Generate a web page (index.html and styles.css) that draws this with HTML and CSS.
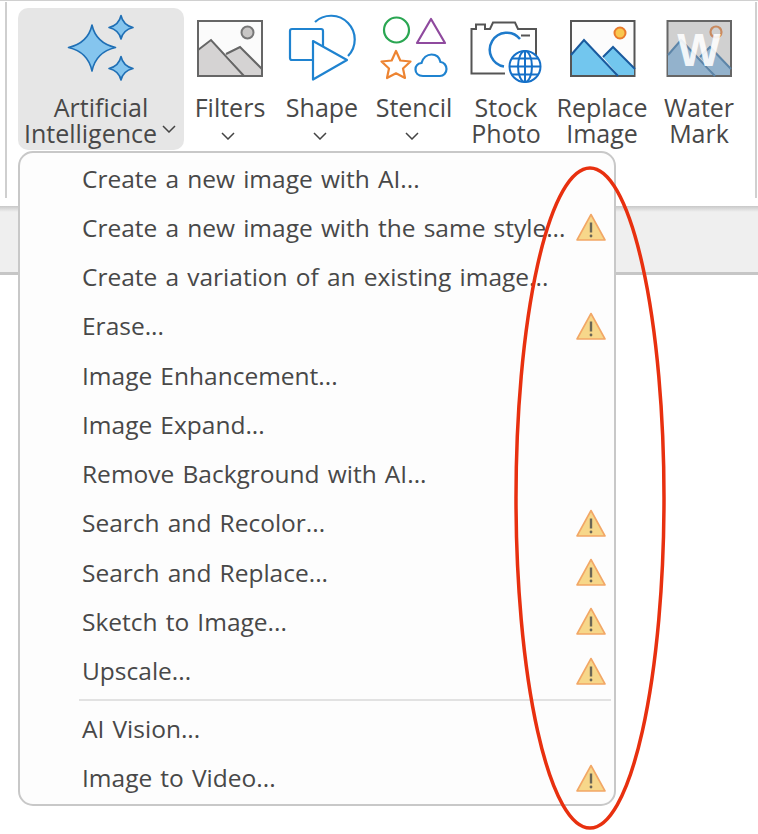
FILE: index.html
```html
<!DOCTYPE html>
<html lang="en">
<head>
<meta charset="utf-8">
<title>Artificial Intelligence menu</title>
<link rel="stylesheet" href="styles.css">
</head>
<body>
<div class="page">
  <header class="ribbon">
    <div class="tools">
      <div class="tool tool-ai">
        <svg class="icon" viewBox="61 12 80 70"><g fill="#85c5ee" stroke="#1f6fb5" stroke-width="1.6" stroke-linejoin="round"><path d="M92 25Q96 43 115.500 47.500Q96 52 92 71Q88 52 68.500 47.500Q88 43 92 25Z"/><path d="M121 15.500Q123 25 133 27.500Q123 30 121 39Q119 30 109 27.500Q119 25 121 15.500Z"/><path d="M121 56.500Q123 66 133 68.500Q123 71 121 80Q119 71 109 68.500Q119 66 121 56.500Z"/></g></svg>
        <div class="label">Artificial<br>Intelligence<svg class="chev-inline" viewBox="0 0 14 8"><path d="M1 1l6 6 6-6" fill="none" stroke="#444" stroke-width="1.500"/></svg></div>
      </div>
      <div class="tool">
        <svg class="icon" viewBox="190 12 80 70"><rect x="198" y="21" width="64" height="55" fill="#fbfbfb" stroke="#666" stroke-width="2"/><path d="M199 50L211 40L244 75H199Z" fill="#d5d3d3"/><path d="M226 54L240 47L261 68V75H244Z" fill="#d5d3d3"/><path d="M198 50L211 40L244 76M226 54L240 47L262 69" fill="none" stroke="#666" stroke-width="2"/><circle cx="247.500" cy="32.500" r="6" fill="#c8c6c5" stroke="#777" stroke-width="2"/></svg>
        <div class="label">Filters</div>
        <svg class="chev" viewBox="0 0 14 8"><path d="M1 1l6 6 6-6" fill="none" stroke="#444" stroke-width="1.500"/></svg>
      </div>
      <div class="tool">
        <svg class="icon" viewBox="282 12 80 70"><g fill="#fff" stroke="#1f83d0" stroke-width="2.200" stroke-linejoin="round"><path d="M315 22A23.700 23.700 0 0 1 348 56" fill="none"/><rect x="290" y="29" width="33" height="31" rx="2"/><path d="M313 41L347 60L313 79.500Z"/></g></svg>
        <div class="label">Shape</div>
        <svg class="chev" viewBox="0 0 14 8"><path d="M1 1l6 6 6-6" fill="none" stroke="#444" stroke-width="1.500"/></svg>
      </div>
      <div class="tool">
        <svg class="icon" viewBox="374 12 80 70"><circle cx="396.500" cy="30" r="12.500" fill="none" stroke="#2aa652" stroke-width="2.200"/><path d="M431 19L445 43H417Z" fill="none" stroke="#8f4a9e" stroke-width="2.200" stroke-linejoin="round"/><path d="M396 51L400.300 60.500L410.500 61.500L403 68.500L405 78L396 73.300L387 78L389 68.500L381.500 61.500L391.700 60.500Z" fill="none" stroke="#ed8432" stroke-width="2.200" stroke-linejoin="round"/><path d="M423 76C418 76 415.500 73 415.500 69.500C415.500 66 418 63.500 421.500 63C423 58 427 54.500 431.500 54.500C436 54.500 439.500 57.500 440.500 62C444 62 446.500 65.500 446.500 69C446.500 73 443.500 76 440 76Z" fill="none" stroke="#1f83d0" stroke-width="2.200"/></svg>
        <div class="label">Stencil</div>
        <svg class="chev" viewBox="0 0 14 8"><path d="M1 1l6 6 6-6" fill="none" stroke="#444" stroke-width="1.500"/></svg>
      </div>
      <div class="tool">
        <svg class="icon" viewBox="466 12 80 70"><path d="M505 73.500H471.500V29H476V24.500H485V29H490L493 22.500H515L518 29H536V55" fill="none" stroke="#555" stroke-width="2"/><path d="M521 35.500H530" stroke="#555" stroke-width="2"/><path d="M504 66.500A17 17 0 1 1 520 39" fill="none" stroke="#1f7bcb" stroke-width="2.500"/><g fill="#fff" stroke="#1570c8" stroke-width="2"><circle cx="525" cy="66.500" r="15.500"/><ellipse cx="525" cy="66.500" rx="7" ry="15.500"/><path d="M525 51V82M510 66.500H540.500M512 58.500H538M512 74.500H538" fill="none"/></g></svg>
        <div class="label">Stock<br>Photo</div>
      </div>
      <div class="tool tool-wide">
        <svg class="icon" viewBox="562 12 80 70"><rect x="571" y="21" width="63.500" height="55" fill="#fcfcfc" stroke="#555" stroke-width="2"/><path d="M572 54L584 40L618 75H572Z" fill="#72c6ee"/><path d="M603 57L613 47L634 68V75H618Z" fill="#72c6ee"/><path d="M571 55L584 40L618 76M603 57L613 47L635 69" fill="none" stroke="#1a5a9e" stroke-width="2"/><circle cx="620" cy="33" r="5.500" fill="#f9c74f" stroke="#ea7a2c" stroke-width="2"/></svg>
        <div class="label">Replace<br>Image</div>
      </div>
      <div class="tool tool-water">
        <svg class="icon" viewBox="659 12 80 70"><rect x="667.500" y="21" width="63.500" height="55" fill="#d0d0d0" stroke="#666" stroke-width="2"/><path d="M668 54L681 40L715 75H668Z" fill="#93b2cc"/><path d="M700 57L710 47L730 68V75H715Z" fill="#93b2cc"/><path d="M668 55L681 40L715 76M700 57L710 47L731 69" fill="none" stroke="#5d85a8" stroke-width="2"/><circle cx="716" cy="32" r="5.500" fill="none" stroke="#c98a5f" stroke-width="2.200"/><text class="wm" x="699" y="66" text-anchor="middle">W</text></svg>
        <div class="label">Water<br>Mark</div>
      </div>
    </div>
  </header>
  <div class="band"></div>

  <nav class="menu">
    <div class="item"><span>Create a new image with AI...</span></div>
    <div class="item"><span>Create a new image with the same style...</span><svg class="warn" viewBox="0 0 30 28"><use href="#warn"/></svg></div>
    <div class="item"><span>Create a variation of an existing image...</span></div>
    <div class="item"><span>Erase...</span><svg class="warn" viewBox="0 0 30 28"><use href="#warn"/></svg></div>
    <div class="item"><span>Image Enhancement...</span></div>
    <div class="item"><span>Image Expand...</span></div>
    <div class="item"><span>Remove Background with AI...</span></div>
    <div class="item"><span>Search and Recolor...</span><svg class="warn" viewBox="0 0 30 28"><use href="#warn"/></svg></div>
    <div class="item"><span>Search and Replace...</span><svg class="warn" viewBox="0 0 30 28"><use href="#warn"/></svg></div>
    <div class="item"><span>Sketch to Image...</span><svg class="warn" viewBox="0 0 30 28"><use href="#warn"/></svg></div>
    <div class="item"><span>Upscale...</span><svg class="warn" viewBox="0 0 30 28"><use href="#warn"/></svg></div>
    <div class="sep"></div>
    <div class="item"><span>AI Vision...</span></div>
    <div class="item"><span>Image to Video...</span><svg class="warn" viewBox="0 0 30 28"><use href="#warn"/></svg></div>
  </nav>

  <svg class="annotation" viewBox="0 0 758 834"><ellipse cx="590" cy="498" rx="74" ry="330" fill="none" stroke="#e8300f" stroke-width="3.500"/></svg>

  <svg class="defs" width="0" height="0"><defs><g id="warn"><path d="M15 1.500L29 27H1Z" fill="#f7d78a" stroke="#f2a766" stroke-width="1.600" stroke-linejoin="round"/><path d="M15 9.500V19.500" stroke="#6b6656" stroke-width="2.400"/><circle cx="15" cy="23" r="1.400" fill="#6b6656"/></g></defs></svg>
</div>
</body>
</html>
```
FILE: styles.css
```css
* { box-sizing: border-box; }
html, body { margin: 0; padding: 0; background: #fff; }
.page {
  position: relative;
  width: 758px;
  height: 834px;
  overflow: hidden;
  font-family: "Open Sans", "Noto Sans", sans-serif;
  color: #484848;
}
.ribbon {
  height: 206px;
  padding: 1px 0 0 5px;
  border-top: 1px solid #d0d0d0;
  background: #fff;
}
.tools {
  display: flex;
  height: 196px;
  padding: 6px 0 0 11px;
  border-left: 2px solid #cfcfcf;
  width: 752px;
  border-right: 2px solid #d0d0d0;
}
.tool {
  width: 92px;
  height: 142px;
  display: flex;
  flex-direction: column;
  align-items: center;
  flex: none;
}
.tool-ai { width: 166px; background: #e6e6e6; border-radius: 10px; }
.tool-wide { width: 100px; }
.tool-water { width: 94px; }
.icon { display: block; width: 80px; height: 70px; margin-top: 4px; flex: none; overflow: visible; }
.label {
  margin-top: 12px;
  font-size: 25px;
  line-height: 26px;
  text-align: center;
  white-space: nowrap;
}
.chev { display: block; width: 14px; height: 8px; margin: 12px 4px 0 0; }
.chev-inline { width: 14px; height: 8px; margin: 0 2px 0 5px; vertical-align: 10px; }
.wm { font-family: "Liberation Sans", sans-serif; font-weight: 700; font-size: 46px; fill: #fff; opacity: .88; }
.band {
  height: 69px;
  background: linear-gradient(#c8c8c8, #efefef 6px);
  border-bottom: 3px solid #c6c6c6;
}
.menu {
  position: absolute;
  left: 18px;
  top: 151px;
  width: 598px;
  height: 655px;
  padding: 0.500px 8px 0 62px;
  background: #fdfdfd;
  border: 2px solid #c8c8c8;
  border-radius: 15px;
}
.item {
  display: flex;
  align-items: center;
  justify-content: space-between;
  height: 49.250px;
  font-size: 24.500px;
  word-spacing: 1.800px;
  white-space: nowrap;
}
.sep {
  height: 2px;
  margin: 3.500px -5px 3.250px -3px;
  background: #e2e2e2;
}
.warn { display: block; width: 30px; height: 28px; flex: none; }
.annotation { position: absolute; left: 0; top: 0; width: 758px; height: 834px; pointer-events: none; }
.defs { position: absolute; }
```
